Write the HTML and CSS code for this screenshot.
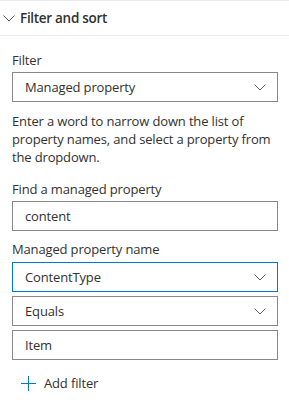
FILE: index.html
```html
<!DOCTYPE html>
<html lang="en">
<head>
<meta charset="UTF-8">
<title>Filter and sort</title>
<link rel="stylesheet" href="styles.css">
</head>
<body>

<div class="group">
  <div class="group-head">
    <svg class="head-chev" width="12" height="7" viewBox="0 0 12 7"><path d="M0.5 0.5 L6 6 L11.5 0.5" fill="none" stroke="#605e5c" stroke-width="1"/></svg>
    <span>Filter and sort</span>
  </div>

  <div class="group-body">
    <div class="label">Filter</div>
    <div class="field dropdown">
      <span>Managed property</span>
      <svg class="chev" width="12" height="7" viewBox="0 0 12 7"><path d="M0.5 0.5 L6 6 L11.5 0.5" fill="none" stroke="#605e5c" stroke-width="1"/></svg>
    </div>

    <p class="hint">Enter a word to narrow down the list of property names, and select a property from the dropdown.</p>

    <div class="label">Find a managed property</div>
    <div class="field"><span>content</span></div>

    <div class="label label-gap">Managed property name</div>
    <div class="stack">
      <div class="field dropdown focused">
        <span>ContentType</span>
        <svg class="chev" width="12" height="7" viewBox="0 0 12 7"><path d="M0.5 0.5 L6 6 L11.5 0.5" fill="none" stroke="#605e5c" stroke-width="1"/></svg>
      </div>
      <div class="field dropdown">
        <span>Equals</span>
        <svg class="chev" width="12" height="7" viewBox="0 0 12 7"><path d="M0.5 0.5 L6 6 L11.5 0.5" fill="none" stroke="#605e5c" stroke-width="1"/></svg>
      </div>
      <div class="field"><span>Item</span></div>
    </div>

    <div class="add">
      <svg width="15" height="15" viewBox="0 0 15 15"><path d="M7.5 0 V15 M0 7.5 H15" fill="none" stroke="#0078d4" stroke-width="1"/></svg>
      <span>Add filter</span>
    </div>
  </div>
</div>

</body>
</html>
```
FILE: styles.css
```css
html,body{margin:0;background:#fff;font-family:"Open Sans","Noto Sans",sans-serif;font-size:13px;letter-spacing:-0.15px;color:#323130}
.group{border-top:1px solid #edebe9}
.group-head{height:34px;display:flex;align-items:center;gap:5px;padding-left:3px;border-bottom:1px solid #edebe9;font-size:13.5px;font-weight:600;letter-spacing:-0.3px}
.head-chev{margin-top:1px}
.group-body{padding:14px 11px 0 12px}
.label{line-height:20px;margin-bottom:2px}
.label-gap{margin-top:8px;margin-bottom:3px}
.field{box-sizing:border-box;height:30px;border:1px solid #8a8886;display:flex;align-items:center;padding:0 10px 0 12px}
.field span{flex:1}
.dropdown .chev{margin-right:1px}
.focused{border-color:#0078d4}
.stack{display:flex;flex-direction:column;gap:4px}
.hint{margin:10px 0 13px;line-height:18px}
.add{display:flex;align-items:center;gap:8px;padding:14px 0 0 9px}
```
